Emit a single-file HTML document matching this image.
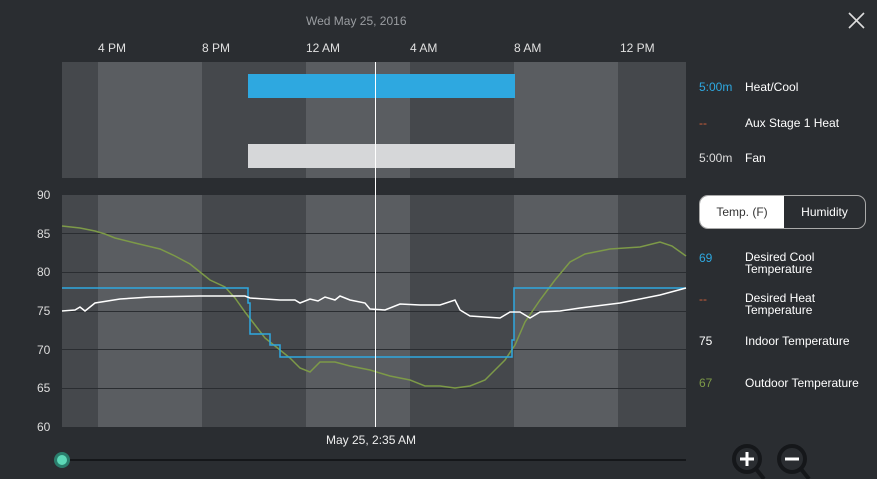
<!DOCTYPE html>
<html><head><style>
body{margin:0;width:877px;height:479px;background:#2a2d31;font-family:"Liberation Sans",sans-serif;overflow:hidden;position:relative;color:#fff}
.t{position:absolute;font-size:12px;white-space:nowrap}
</style></head><body>
<svg width="877" height="479" style="position:absolute;left:0;top:0">
<g>
<rect x="62" y="62" width="624" height="116" fill="#45484c"/>
<rect x="62" y="195" width="624" height="232" fill="#45484c"/>
<g fill="#5a5d61">
<rect x="98" y="62" width="104" height="116"/><rect x="306" y="62" width="104" height="116"/><rect x="514" y="62" width="104" height="116"/>
<rect x="98" y="195" width="104" height="232"/><rect x="306" y="195" width="104" height="232"/><rect x="514" y="195" width="104" height="232"/>
</g>
<rect x="248" y="74" width="267" height="24" fill="#2ea8e0"/>
<rect x="248" y="144" width="267" height="24" fill="#d6d7d9"/>
<g stroke="#2a2d31" stroke-width="1">
<line x1="62" y1="233.5" x2="686" y2="233.5"/><line x1="62" y1="272.5" x2="686" y2="272.5"/><line x1="62" y1="311.5" x2="686" y2="311.5"/><line x1="62" y1="349.5" x2="686" y2="349.5"/><line x1="62" y1="388.5" x2="686" y2="388.5"/>
</g>
<polyline fill="none" stroke="#7d9a48" stroke-width="1.5" points="62,226 80,228 95,231 105,234 115,238 135,243 160,249 175,256 190,264 200,272 210,280 225,287 235,298 245,312 255,325 265,338 275,346 290,358 300,368 310,372 320,362 335,362 350,366 370,370 390,376 410,380 425,386 440,386 455,388 470,386 485,380 495,370 505,360 515,345 525,322 540,300 555,280 570,262 585,254 610,249 640,247 660,242 672,246 686,256"/>
<polyline fill="none" stroke="#2ea8e0" stroke-width="1.5" points="62,288 248,288 248,303 250,303 250,334 270,334 270,345 280,345 280,357 512,357 512,340 514,340 514,288 686,288"/>
<polyline fill="none" stroke="#fff" stroke-width="1.5" points="62,311 75,310 80,307 85,311 95,303 120,299 150,297 200,296 245,296 250,298 280,300 295,300 300,303 310,299 318,301 325,297 335,300 340,296 350,300 365,303 370,309 385,310 400,304 420,305 440,305 455,300 460,310 470,316 500,318 510,312 520,312 530,318 540,312 560,311 580,308 620,303 660,295 686,288"/>
<line x1="375.5" y1="62" x2="375.5" y2="427" stroke="#fff" stroke-width="1"/>
<line x1="62" y1="460" x2="686" y2="460" stroke="#15171a" stroke-width="2"/>
<circle cx="62" cy="460" r="8" fill="#2a7d6c"/><circle cx="62" cy="460" r="5" fill="#5dd9b8"/>
<path d="M849 13 L864 28 M864 13 L849 28" stroke="#ddd" stroke-width="1.6"/>
<g stroke="#15171a" stroke-width="4" fill="#2a2d31"><circle cx="747" cy="459" r="13"/><line x1="756" y1="469" x2="764" y2="479"/><circle cx="792" cy="459" r="13"/><line x1="801" y1="469" x2="809" y2="479"/></g>
<path d="M740 459h14M747 452v14M785 459h14" stroke="#fff" stroke-width="3"/>
</g>
</svg>
<div class="t" style="left:306px;top:14px;color:#9a9da1">Wed May 25, 2016</div>
<div class="t" style="left:98px;top:41px;color:#e0e0e0">4 PM</div>
<div class="t" style="left:202px;top:41px;color:#e0e0e0">8 PM</div>
<div class="t" style="left:306px;top:41px;color:#e0e0e0">12 AM</div>
<div class="t" style="left:410px;top:41px;color:#e0e0e0">4 AM</div>
<div class="t" style="left:514px;top:41px;color:#e0e0e0">8 AM</div>
<div class="t" style="left:620px;top:41px;color:#e0e0e0">12 PM</div>
<div class="t" style="left:37px;top:188px;color:#ddd">90</div>
<div class="t" style="left:37px;top:227px;color:#ddd">85</div>
<div class="t" style="left:37px;top:265px;color:#ddd">80</div>
<div class="t" style="left:37px;top:304px;color:#ddd">75</div>
<div class="t" style="left:37px;top:343px;color:#ddd">70</div>
<div class="t" style="left:37px;top:381px;color:#ddd">65</div>
<div class="t" style="left:37px;top:420px;color:#ddd">60</div>
<div class="t" style="left:326px;top:433px;color:#eee">May 25, 2:35 AM</div>
<div class="t" style="left:699px;top:80px;color:#2ea8e0">5:00m</div><div class="t" style="left:745px;top:80px">Heat/Cool</div>
<div class="t" style="left:699px;top:116px;color:#d0603a">--</div><div class="t" style="left:745px;top:116px">Aux Stage 1 Heat</div>
<div class="t" style="left:699px;top:151px;color:#ddd">5:00m</div><div class="t" style="left:745px;top:151px">Fan</div>
<div style="position:absolute;left:699px;top:195px;width:165px;height:32px;border:1px solid #aaa;border-radius:9px;overflow:hidden">
<div style="position:absolute;left:0;top:0;width:84px;height:32px;background:#fff;color:#333;font-size:12px;line-height:32px;text-align:center">Temp. (F)</div>
<div style="position:absolute;left:84px;top:0;width:81px;height:32px;font-size:12px;line-height:32px;text-align:center">Humidity</div></div>
<div class="t" style="left:699px;top:251px;color:#2ea8e0">69</div><div class="t" style="left:745px;top:251px;line-height:12px">Desired Cool<br>Temperature</div>
<div class="t" style="left:699px;top:292px;color:#d0603a">--</div><div class="t" style="left:745px;top:292px;line-height:12px">Desired Heat<br>Temperature</div>
<div class="t" style="left:699px;top:334px">75</div><div class="t" style="left:745px;top:334px">Indoor Temperature</div>
<div class="t" style="left:699px;top:376px;color:#7d9a48">67</div><div class="t" style="left:745px;top:376px">Outdoor Temperature</div>
</body></html>
